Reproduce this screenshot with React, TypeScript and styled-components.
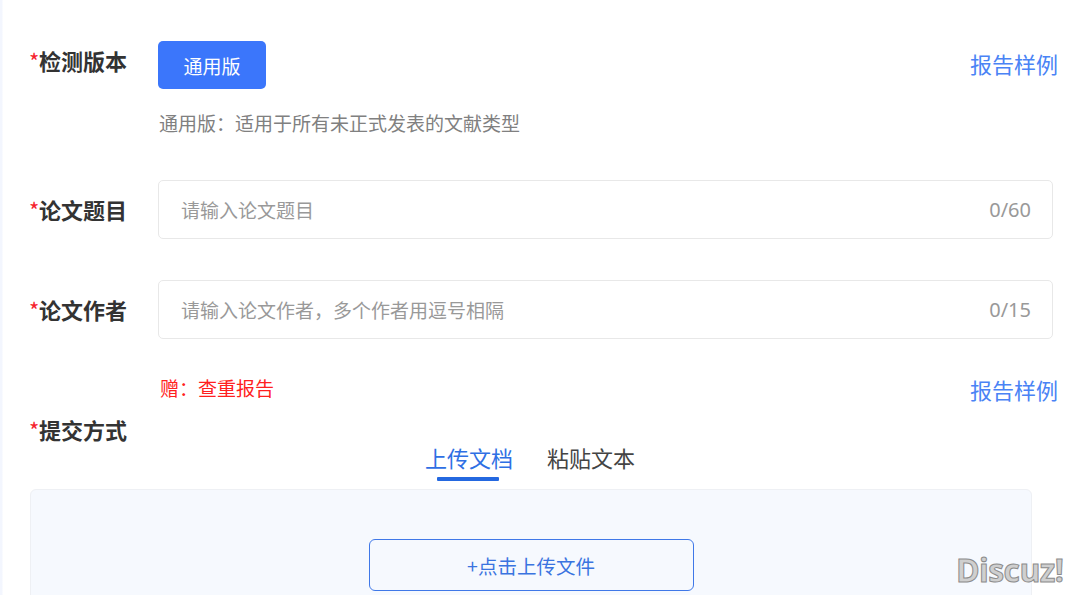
import React, { FC } from 'react';
import styled, { createGlobalStyle } from 'styled-components';

const FONT = '"Noto Sans CJK SC", "Noto Sans", sans-serif';

const GlobalStyle = createGlobalStyle`
  html, body {
    margin: 0;
    padding: 0;
    width: 1080px;
    height: 595px;
    overflow: hidden;
    background: #fff;
    font-family: ${FONT};
  }
`;

const App: FC = () => {
  return (
    <Page>
      <GlobalStyle />
      <VersionRow>
        <Label>检测版本</Label>
        <VersionBody>
          <PrimaryButton>通用版</PrimaryButton>
          <Hint>通用版：适用于所有未正式发表的文献类型</Hint>
        </VersionBody>
        <SampleLink>报告样例</SampleLink>
      </VersionRow>

      <InputRow>
        <Label>论文题目</Label>
        <InputBox>
          <Placeholder>请输入论文题目</Placeholder>
          <Counter>0/60</Counter>
        </InputBox>
      </InputRow>

      <InputRow>
        <Label>论文作者</Label>
        <InputBox>
          <Placeholder>请输入论文作者，多个作者用逗号相隔</Placeholder>
          <Counter>0/15</Counter>
        </InputBox>
      </InputRow>

      <GiftRow>
        <GiftText>赠：查重报告</GiftText>
        <SampleLink>报告样例</SampleLink>
      </GiftRow>

      <SubmitLabel>提交方式</SubmitLabel>

      <Tabs>
        <Tab $active>
          上传文档
          <TabLine />
        </Tab>
        <Tab>粘贴文本</Tab>
      </Tabs>

      <UploadPanel>
        <UploadButton>+点击上传文件</UploadButton>
      </UploadPanel>

      <Watermark>Discuz!</Watermark>
    </Page>
  );
};

export default App;

const Page = styled.div`
  position: relative;
  box-sizing: border-box;
  width: 1080px;
  height: 595px;
  overflow: hidden;
  padding: 41px 22px 0 30px;
  background: linear-gradient(to right, #f3f6fe 0, #f3f6fe 2px, #fff 3px);
`;

const Label = styled.div`
  width: 128px;
  flex-shrink: 0;
  font-size: 22px;
  line-height: 32px;
  font-weight: 700;
  color: #333;
  white-space: nowrap;

  &::before {
    content: '*';
    display: inline-block;
    width: 10px;
    margin-left: -1px;
    color: #f5222d;
    font-weight: 400;
  }
`;

const VersionRow = styled.div`
  display: flex;
  align-items: flex-start;
  height: 139px;

  ${Label} {
    margin-top: 3px;
  }
`;

const VersionBody = styled.div`
  flex: 1;
  display: flex;
  flex-direction: column;
  align-items: flex-start;
`;

const PrimaryButton = styled.div`
  width: 108px;
  height: 48px;
  display: flex;
  align-items: center;
  justify-content: center;
  border-radius: 5px;
  background: #3b76fb;
  color: #fff;
  font-size: 19px;
`;

const Hint = styled.div`
  margin: 21px 0 0 1px;
  font-size: 19px;
  line-height: 26px;
  color: #808080;
`;

const SampleLink = styled.div`
  font-size: 22px;
  line-height: 32px;
  color: #4a83f5;
  white-space: nowrap;
  margin-top: 6px;
`;

const InputRow = styled.div`
  display: flex;
  align-items: center;
  width: 1023px;
  height: 59px;
  margin-bottom: 41px;

  ${Label} {
    margin-top: -2px;
  }
`;

const InputBox = styled.div`
  flex: 1;
  box-sizing: border-box;
  height: 59px;
  display: flex;
  align-items: center;
  justify-content: space-between;
  padding: 0 21px 0 22px;
  border: 1px solid #e8e8e8;
  border-radius: 5px;
  background: #fff;
`;

const Placeholder = styled.span`
  font-size: 19px;
  color: #999;
`;

const Counter = styled.span`
  font-family: "Noto Sans", sans-serif;
  font-size: 20px;
  color: #999;
`;

const GiftRow = styled.div`
  display: flex;
  justify-content: space-between;
  align-items: flex-start;
  height: 28px;
  padding-left: 130px;
  margin-top: -5px;

  ${SampleLink} {
    margin-top: -2px;
  }
`;

const GiftText = styled.div`
  font-size: 19px;
  line-height: 26px;
  color: #ff2020;
`;

const SubmitLabel = styled(Label)`
  margin-top: 10px;
`;

const Tabs = styled.div`
  display: flex;
  justify-content: center;
  gap: 34px;
  width: 1000px;
  height: 48px;
  margin-top: -4px;
`;

const Tab = styled.div<{ $active?: boolean }>`
  position: relative;
  font-size: 22px;
  line-height: 32px;
  height: 32px;
  color: ${(p) => (p.$active ? '#2f6fe4' : '#444')};
`;

const TabLine = styled.div`
  position: absolute;
  left: 12px;
  top: 36px;
  width: 62px;
  height: 4px;
  border-radius: 1px;
  background: #2468e0;
`;

const UploadPanel = styled.div`
  box-sizing: border-box;
  width: 1002px;
  height: 200px;
  padding-top: 49px;
  display: flex;
  justify-content: center;
  align-items: flex-start;
  border: 1px solid #eef0f4;
  border-radius: 6px;
  background: #f6f9fe;
`;

const UploadButton = styled.div`
  box-sizing: border-box;
  width: 325px;
  height: 52px;
  display: flex;
  align-items: center;
  justify-content: center;
  border: 1px solid #3f78e8;
  border-radius: 6px;
  color: #3a74e0;
  font-size: 19.5px;
`;

const Watermark = styled.div`
  position: absolute;
  left: 956px;
  top: 551px;
  font-family: "Open Sans", "Noto Sans", sans-serif;
  font-size: 32px;
  line-height: 38px;
  font-weight: 700;
  letter-spacing: -0.6px;
  color: #cfcfcf;
  -webkit-text-stroke: 1px #8c8c8c;
  white-space: nowrap;
`;
